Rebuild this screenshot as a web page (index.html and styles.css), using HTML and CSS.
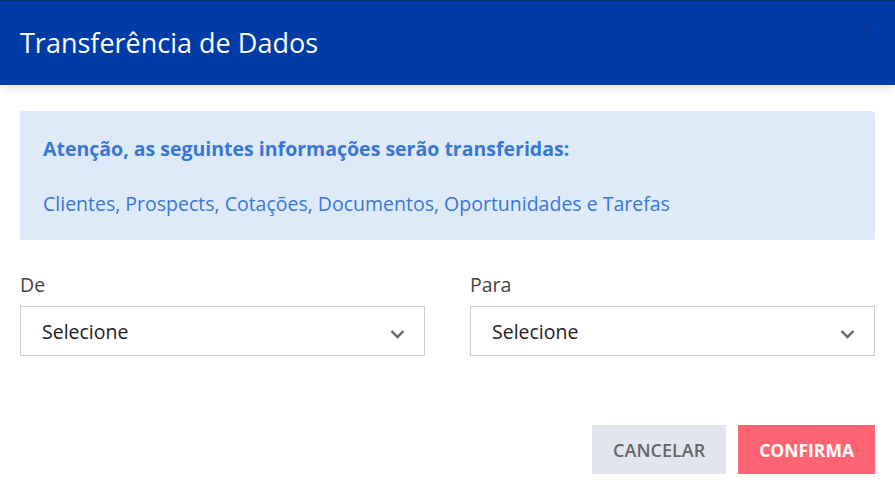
FILE: index.html
```html
<!DOCTYPE html>
<html lang="pt-BR">
<head>
    <meta charset="UTF-8">
    <meta name="viewport" content="width=device-width, initial-scale=1.0">
    <title>Transferência de Dados</title>
    <link rel="stylesheet" href="styles.css">
</head>
<body>
    <div class="modal">
        <div class="modal-header">
            <h1>Transferência de Dados</h1>
            <span class="close">X</span>
        </div>
        <div class="modal-body">
            <div class="notice">
                <p class="notice-title">Atenção, as seguintes informações serão transferidas:</p>
                <p class="notice-list">Clientes, Prospects, Cotações, Documentos, Oportunidades e Tarefas</p>
            </div>
            <div class="fields">
                <div class="field">
                    <label for="de">De</label>
                    <div class="select">
                        <span>Selecione</span>
                        <svg width="15" height="10" viewBox="0 0 15 10"><path d="M1.5 2 L7.5 8 L13.5 2" fill="none" stroke="#666" stroke-width="2.4"/></svg>
                    </div>
                </div>
                <div class="field">
                    <label for="para">Para</label>
                    <div class="select">
                        <span>Selecione</span>
                        <svg width="15" height="10" viewBox="0 0 15 10"><path d="M1.5 2 L7.5 8 L13.5 2" fill="none" stroke="#666" stroke-width="2.4"/></svg>
                    </div>
                </div>
            </div>
            <div class="actions">
                <button class="btn btn-cancel">CANCELAR</button>
                <button class="btn btn-confirm">CONFIRMA</button>
            </div>
        </div>
    </div>
</body>
</html>
```

FILE: styles.css
```css
body {
    margin: 0;
    font-family: 'Open Sans', sans-serif;
    background: #fff;
    width: 895px;
    height: 494px;
    overflow: hidden;
}
.modal {
    border-top: 1px solid #13306e;
}
.modal-header {
    background: #003ca6;
    height: 84px;
    display: flex;
    align-items: center;
    justify-content: space-between;
    padding: 0 20px;
    box-shadow: 0 3px 12px rgba(0, 0, 0, 0.12);
    position: relative;
}
.modal-header h1 {
    margin: 0;
    color: #fff;
    font-size: 27px;
    font-weight: 400;
    line-height: 36px;
}
.close {
    color: #15378c;
    font-size: 18px;
    line-height: 20px;
    align-self: flex-start;
    margin-top: 20px;
    margin-right: 1px;
}
.modal-body {
    padding: 26px 20px 0;
}
.notice {
    background: #dfeaf8;
    border-radius: 3px;
    padding: 24px 23px 23px;
    color: #3777d8;
    font-size: 19.5px;
    line-height: 27px;
}
.notice p {
    margin: 0;
}
.notice-title {
    font-weight: 700;
}
.notice .notice-list {
    margin-top: 28px;
}
.fields {
    display: flex;
    gap: 45px;
    margin-top: 31px;
}
.field {
    flex: 1;
}
.field label {
    display: block;
    font-size: 19.5px;
    line-height: 27px;
    color: #444;
    margin-bottom: 8px;
}
.select {
    height: 48px;
    border: 1px solid #ccd0d6;
    display: flex;
    align-items: center;
    justify-content: space-between;
    padding: 0 19px 0 21px;
    font-size: 19.5px;
    color: #222;
}
.select svg {
    margin-top: 5px;
}
.actions {
    display: flex;
    justify-content: flex-end;
    gap: 12px;
    margin-top: 69px;
}
.btn {
    border: none;
    height: 49px;
    font-family: 'Open Sans', sans-serif;
    font-size: 18px;
    font-weight: 700;
    padding: 0 21px;
}
.btn-cancel {
    background: #e1e5ed;
    color: #666;
    font-weight: 600;
}
.btn-confirm {
    background: #ff6473;
    color: #fff;
    font-size: 17.5px;
}
```
